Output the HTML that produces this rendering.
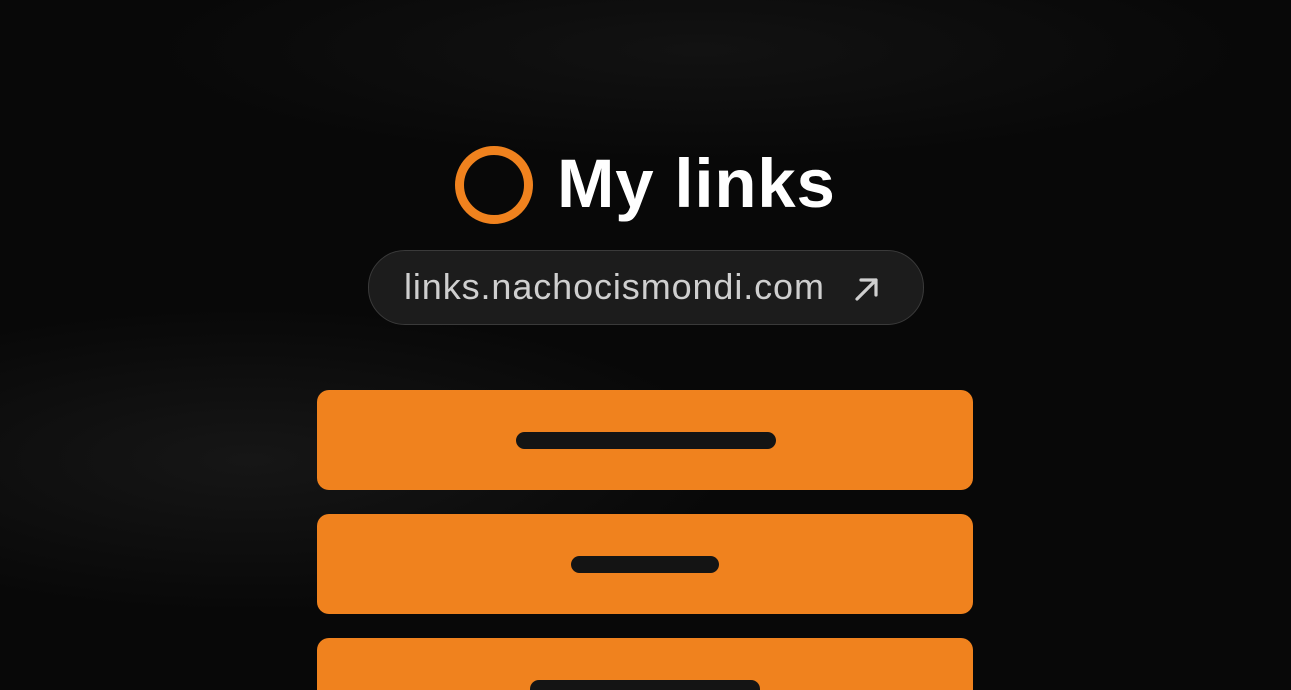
<!DOCTYPE html>
<html><head><style>
html,body{margin:0;padding:0;width:1291px;height:690px;overflow:hidden}
body{position:relative;font-family:"Liberation Sans",sans-serif;
background:radial-gradient(ellipse 700px 220px at 250px 460px,#161616,transparent 70%),radial-gradient(ellipse 800px 160px at 700px 50px,#121212,transparent 70%),#080808;}
.ring{position:absolute;left:455px;top:146px;width:60px;height:60px;border:9.5px solid #f0821e;border-radius:50%}
.title{position:absolute;left:557px;top:144px;font-size:69px;font-weight:bold;color:#fff;line-height:80px;letter-spacing:0.8px}
.pill{position:absolute;left:368px;top:250px;width:554px;height:73px;border:1px solid #3a3a3a;border-radius:37px;background:#1c1c1c}
.pill span{position:absolute;left:35px;top:16px;font-size:36px;color:#cfcfcf;line-height:40px;letter-spacing:0.9px}
.pill svg{position:absolute;left:484px;top:24px}
.btn{position:absolute;left:317px;width:656px;height:100px;background:#f0821e;border-radius:12px}
.bar{position:absolute;height:17px;background:#141414;border-radius:9px}
</style></head><body>
<div class="ring"></div>
<div class="title">My links</div>
<div class="pill"><span>links.nachocismondi.com</span>
<svg width="28" height="28" viewBox="0 0 28 28"><path d="M4 24 L23 5 M8 5 H23 V20" stroke="#cfcfcf" stroke-width="3.2" fill="none" stroke-linecap="round" stroke-linejoin="round"/></svg></div>
<div class="btn" style="top:390px"></div><div class="bar" style="left:516px;top:432px;width:260px"></div>
<div class="btn" style="top:514px"></div><div class="bar" style="left:571px;top:556px;width:148px"></div>
<div class="btn" style="top:638px;height:52px;border-radius:12px 12px 0 0"></div><div class="bar" style="left:530px;top:680px;width:230px;height:10px;border-radius:9px 9px 0 0"></div>
</body></html>
